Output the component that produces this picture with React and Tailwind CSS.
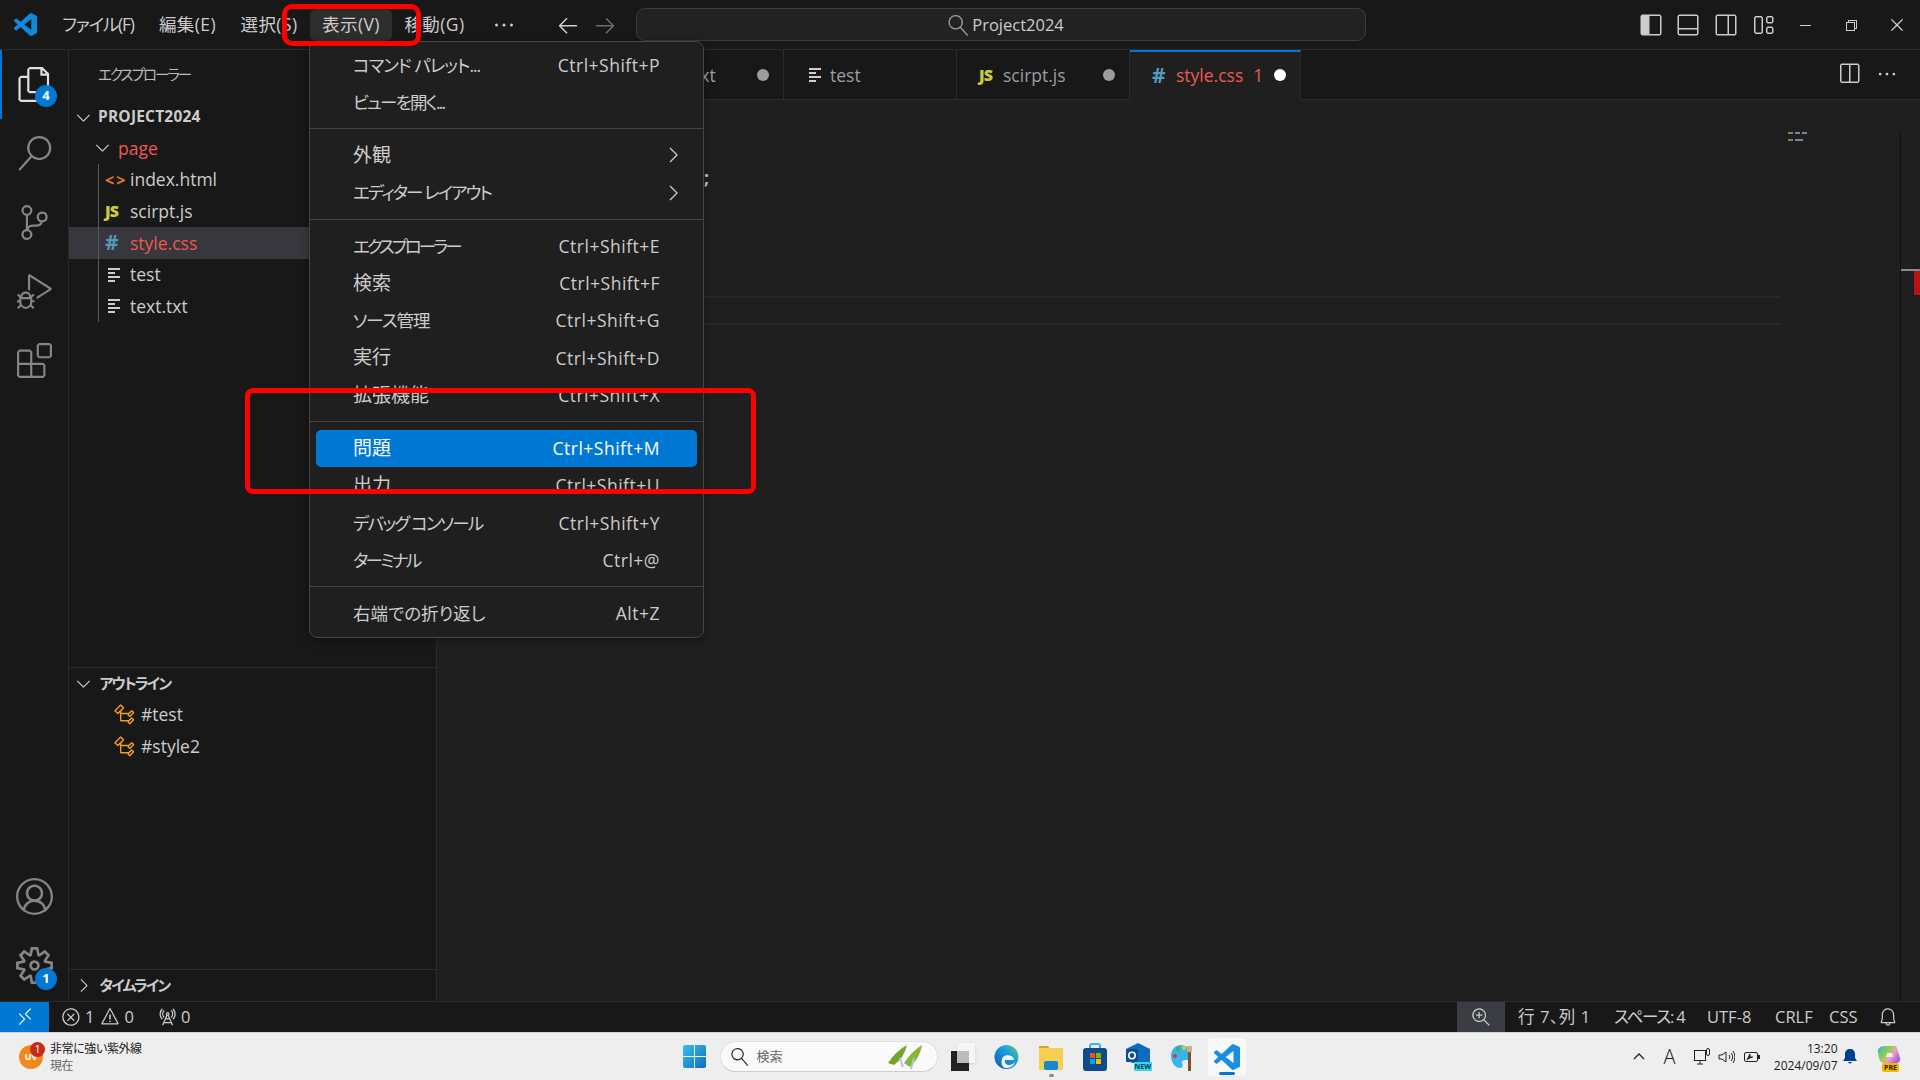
import React from "react";
import {
  VscFiles, VscSearch, VscSourceControl, VscDebugAlt, VscExtensions, VscAccount, VscSettingsGear,
  VscChevronDown, VscChevronRight, VscArrowLeft, VscArrowRight, VscEllipsis, VscLayoutSidebarLeft,
  VscLayoutPanelOff, VscLayoutSidebarRightOff, VscLayout, VscSplitHorizontal, VscChromeMinimize,
  VscChromeRestore, VscChromeClose, VscRemote, VscError, VscWarning, VscRadioTower, VscZoomIn, VscBell,
  VscSymbolClass,
} from "react-icons/vsc";

const Badge = ({ n }) => (
  <span className="absolute right-[11px] bottom-[12px] w-[22px] h-[22px] rounded-full bg-[#0078d4] text-white text-[13px] font-bold flex items-center justify-center">{n}</span>
);

const Activity = ({ icon: Icon, active, badge }) => (
  <div className={"relative h-[69px] w-full flex items-center justify-center " + (active ? "text-[#e0e0e0]" : "text-[#858585]")}>
    {active && <span className="absolute left-0 top-0 bottom-0 w-[2px] bg-[#0078d4]" />}
    <Icon size={35} />
    {badge && <Badge n={badge} />}
  </div>
);

const TextIcon = () => (
  <span className="w-[13px] ml-[3px] flex flex-col gap-[2px]">
    <span className="h-[2px] w-[12px] bg-[#cccccc]" />
    <span className="h-[2px] w-[7px] bg-[#cccccc]" />
    <span className="h-[2px] w-[12px] bg-[#cccccc]" />
    <span className="h-[2px] w-[7px] bg-[#cccccc]" />
  </span>
);
const JsIcon = () => <span className="text-[16px] font-extrabold leading-none text-[#cbcb41] tracking-[-1px]">JS</span>;
const HashIcon = () => <span className="text-[21px] font-bold leading-none text-[#519aba]">#</span>;
const HtmlIcon = () => <span className="text-[16px] font-bold leading-none text-[#e37933] tracking-[2px]">{"<>"}</span>;

const FileRow = ({ icon, name, selected }) => (
  <div className={"h-[31.7px] flex items-center pl-[36px] " + (selected ? "bg-[#37373d] text-[#f0574e]" : "text-[#cccccc]")}>
    <span className="w-[25px] flex justify-start">{icon}</span>
    <span>{name}</span>
  </div>
);

const Menu = ({ label, keys, arrow, active, tr }) => (
  <div className={"h-[37.3px] flex items-center justify-between pl-[37px] pr-[37px] mx-[6px] rounded-[5px] relative " + (active ? "bg-[#0078d4] text-white" : "text-[#cccccc]")}>
    <span className={tr || ""}>{label}</span>
    {keys && <span className="tracking-[0.5px]">{keys}</span>}
    {arrow && <VscChevronRight size={24} className="absolute right-[12px] text-[#cccccc]" />}
  </div>
);
const Sep = () => <div className="h-px my-[7.5px] bg-[#454545]" />;

const Tab = ({ w, icon, name, nameCls, extra, dot, active }) => (
  <div className={"h-full flex items-center relative border-r border-[#2b2b2b] " + w + (active ? " bg-[#1f1f1f] border-t-2 border-t-[#0078d4] pb-[1px]" : " bg-[#181818] border-b border-b-[#2b2b2b] pt-[1px]")}>
    <span className="w-[46px] pl-[22px] flex items-center">{icon}</span>
    <span className={nameCls || "text-[#9d9d9d]"}>{name}</span>
    {extra}
    {dot && <span className={"absolute right-[14px] w-[12px] h-[12px] rounded-full " + dot} />}
  </div>
);

const TitleItem = ({ w, children, cls }) => (
  <div className={"h-[32px] flex items-center justify-center rounded-[6px] tracking-[0.4px] " + w + " " + (cls || "")}>{children}</div>
);

const Status = ({ children, cls }) => <span className={"flex items-center text-[#cccccc] " + (cls || "")}>{children}</span>;

const Tray = ({ children, cls }) => (
  <div className={"relative w-[44px] h-[38px] flex items-center justify-center " + (cls || "")}>{children}</div>
);

const VsLogo = ({ size, className }) => (
  <svg viewBox="0 0 24 24" width={size} height={size} className={className} fill="currentColor">
    <path d="M23.15 2.587L18.21.21a1.494 1.494 0 0 0-1.705.29l-9.46 8.63-4.12-3.128a.999.999 0 0 0-1.276.057L.327 7.261A1 1 0 0 0 .326 8.74L3.899 12 .326 15.26a1 1 0 0 0 .001 1.479L1.65 17.94a.999.999 0 0 0 1.276.057l4.12-3.128 9.46 8.63a1.492 1.492 0 0 0 1.704.29l4.942-2.377A1.5 1.5 0 0 0 24 20.06V3.939a1.5 1.5 0 0 0-.85-1.352zm-5.146 14.861L10.826 12l7.178-5.448v10.896z" />
  </svg>
);

export default function App() {
  return (
    <div className='relative w-[1920px] h-[1080px] overflow-hidden flex flex-col bg-[#181818] text-[17.5px] [font-family:"Open_Sans","Noto_Sans_CJK_JP",sans-serif] [font-feature-settings:"palt"]'>
      {/* title bar */}
      <div className="h-[50px] shrink-0 flex items-center border-b border-[#2b2b2b] text-[#cccccc]">
        <div className="w-[49px] flex justify-center pl-[2px]"><VsLogo size={23} className="text-[#0f8ae0]" /></div>
        <TitleItem w="w-[98px]"><span className="tracking-[-1.2px]">ファイル(F)</span></TitleItem>
        <TitleItem w="w-[81px]">編集(E)</TitleItem>
        <TitleItem w="w-[82px]">選択(S)</TitleItem>
        <TitleItem w="w-[82px]" cls="bg-[#2e2e2e]">表示(V)</TitleItem>
        <TitleItem w="w-[85px]">移動(G)</TitleItem>
        <TitleItem w="w-[54px]"><VscEllipsis size={24} /></TitleItem>
        <TitleItem w="w-[37px] ml-[18px]"><VscArrowLeft size={24} /></TitleItem>
        <TitleItem w="w-[37px]"><VscArrowRight size={24} className="text-[#6e6e6e]" /></TitleItem>
        <div className="ml-[13px] w-[730px] h-[33px] pt-[1px] bg-[#222222] border border-[#3c3c3c] rounded-[9px] flex items-center justify-center gap-[3px] pl-[10px] text-[16.5px]">
          <VscSearch size={21} className="-scale-x-100 text-[#9a9a9a]" />
          <span>Project2024</span>
        </div>
        <div className="flex-1" />
        {[VscLayoutSidebarLeft, VscLayoutPanelOff, VscLayoutSidebarRightOff, VscLayout].map((I, i) => (
          <div key={i} className="w-[37.5px] flex justify-center"><I size={24} /></div>
        ))}
        <div className="w-[46px] flex justify-center"><VscChromeMinimize size={16} /></div>
        <div className="w-[46px] flex justify-center"><VscChromeRestore size={16} /></div>
        <div className="w-[46px] flex justify-center"><VscChromeClose size={18} /></div>
      </div>

      {/* main */}
      <div className="flex-1 flex min-h-0">
        {/* activity bar */}
        <div className="w-[69px] shrink-0 border-r border-[#2b2b2b] flex flex-col">
          <Activity icon={VscFiles} active badge="4" />
          <Activity icon={VscSearch} />
          <Activity icon={VscSourceControl} />
          <Activity icon={VscDebugAlt} />
          <Activity icon={VscExtensions} />
          <div className="flex-1" />
          <div className="h-[70px] flex items-center justify-center text-[#858585] pb-[1px]"><VscAccount size={37} /></div>
          <div className="relative h-[69px] flex items-center justify-center text-[#858585] pb-[3px]">
            <VscSettingsGear size={37} />
            <span className="absolute right-[11px] top-[36px] w-[22px] h-[22px] rounded-full bg-[#0078d4] text-white text-[13px] font-bold flex items-center justify-center">1</span>
          </div>
        </div>

        {/* sidebar */}
        <div className="w-[368px] shrink-0 border-r border-[#2b2b2b] flex flex-col">
          <div className="h-[50px] shrink-0 flex items-center pl-[29px] text-[14.5px] text-[#bbbbbb] tracking-[-2px]">エクスプローラー</div>
          <div className="h-[32px] shrink-0 flex items-center pl-[4px] pt-[2px] text-[15.5px] font-bold text-[#cccccc] tracking-[0.2px]">
            <VscChevronDown size={21} className="mr-[4px]" />PROJECT2024
          </div>
          <div className="h-[31.7px] shrink-0 flex items-center pl-[23px] text-[#f0574e]">
            <VscChevronDown size={21} className="mr-[5px] text-[#cccccc]" />page
          </div>
          <div className="relative shrink-0">
            <span className="absolute left-[29px] top-0 bottom-0 w-px bg-[#585858]" />
            <FileRow icon={<HtmlIcon />} name="index.html" />
            <FileRow icon={<JsIcon />} name="scirpt.js" />
            <FileRow icon={<HashIcon />} name="style.css" selected />
            <FileRow icon={<TextIcon />} name="test" />
            <FileRow icon={<TextIcon />} name="text.txt" />
          </div>
          <div className="h-[344.8px] shrink-0" />
          <div className="border-t border-[#2b2b2b] h-[31.5px] shrink-0 flex items-center pl-[4px] text-[15px] font-bold text-[#cccccc] tracking-[-1.8px]">
            <VscChevronDown size={21} className="mr-[5.5px]" />アウトライン
          </div>
          {["#test", "#style2"].map((t) => (
            <div key={t} className="h-[32px] shrink-0 flex items-center pl-[44px] text-[#cccccc]">
              <VscSymbolClass size={23} className="mr-[5px] text-[#ee9d28]" />{t}
            </div>
          ))}
          <div className="flex-1" />
          <div className="border-t border-[#2b2b2b] h-[32px] shrink-0 flex items-center pl-[4px] text-[15px] font-bold text-[#cccccc] tracking-[-1.8px]">
            <VscChevronRight size={21} className="mr-[5.5px]" />タイムライン
          </div>
        </div>

        {/* editor */}
        <div className="flex-1 min-w-0 flex flex-col bg-[#1f1f1f]">
          <div className="h-[49.5px] shrink-0 flex bg-[#181818]">
            <Tab w="w-[175px]" />
            <Tab w="w-[172px]" icon={<TextIcon />} name="text.txt" dot="bg-[#9d9d9d]" />
            <Tab w="w-[173px]" icon={<TextIcon />} name="test" />
            <Tab w="w-[173px]" icon={<JsIcon />} name="scirpt.js" dot="bg-[#9d9d9d]" />
            <Tab
              w="w-[171px]"
              active
              icon={<HashIcon />}
              name="style.css"
              nameCls="text-[#f0574e]"
              extra={<span className="ml-[10px] text-[#f0574e]">1</span>}
              dot="bg-white"
            />
            <div className="flex-1 border-b border-[#2b2b2b] flex items-center justify-end pr-[22px] gap-[15px] text-[#cccccc]">
              <VscSplitHorizontal size={24} />
              <VscEllipsis size={22} />
            </div>
          </div>
          <div className="flex-1 flex min-h-0">
            <div className="flex-1 min-w-0 flex">
              <div className="w-[1343px] shrink-0 pt-[64px] pl-[267px] flex flex-col">
                <div className="h-[28px] flex items-center text-[#cccccc] font-bold">;</div>
                <div className="mt-[104px] ml-[-267px] h-[29px] border-y-2 border-[#282828]" />
              </div>
              <div className="pl-[8px] pt-[32px] flex flex-col gap-[5px]">
                <div className="flex gap-[2px]"><span className="w-[5px] h-[2px] bg-[#8a7a5a]" /><span className="w-[5px] h-[2px] bg-[#6a8aa0]" /><span className="w-[5px] h-[2px] bg-[#6a8aa0]" /></div>
                <div className="flex gap-[2px]"><span className="w-[5px] h-[2px] bg-[#8a7a5a]" /><span className="w-[8px] h-[2px] bg-[#6a8aa0]" /></div>
              </div>
            </div>
            <div className="w-[20px] shrink-0 mt-[33px] border-l border-[#111111] flex flex-col">
              <div className="mt-[136px] h-[2px] bg-[#8a8a8a]" />
              <div className="ml-[13px] w-[6px] h-[24px] bg-[#b81212]" />
            </div>
          </div>
        </div>
      </div>

      {/* status bar */}
      <div className="h-[31px] shrink-0 border-t border-[#2b2b2b] flex items-center text-[16.5px]">
        <div className="w-[49px] h-full bg-[#0078d4] text-white flex items-center justify-center"><VscRemote size={20} /></div>
        <Status cls="ml-[12px]"><VscError size={20} className="mr-[4px]" />1</Status>
        <Status cls="ml-[6px]"><VscWarning size={20} className="mr-[4px]" />0</Status>
        <Status cls="ml-[23px]"><VscRadioTower size={20} className="mr-[4px]" />0</Status>
        <div className="flex-1" />
        <div className="w-[48px] h-full bg-[#3a3d41] flex items-center justify-center text-[#cccccc]"><VscZoomIn size={20} /></div>
        <Status cls="ml-[13px] w-[96px] tracking-[0.6px]">行 7、列 1</Status>
        <Status cls="w-[93px] tracking-[-1.2px]">スペース: 4</Status>
        <Status cls="w-[68px]">UTF-8</Status>
        <Status cls="w-[54px]">CRLF</Status>
        <Status cls="w-[43px]">CSS</Status>
        <div className="w-[32px] mr-[16px] flex justify-center text-[#cccccc]"><VscBell size={20} /></div>
      </div>

      {/* taskbar */}
      <div className="h-[48px] shrink-0 bg-[#eeeeee] border-t border-[#d4d4d4] flex items-center text-[#1a1a1a]">
        <div className="w-[677px] shrink-0 flex items-center pl-[19px]">
          <div className="relative w-[24px] h-[24px] rounded-full bg-[#f08a1e] text-white text-[9px] font-bold flex items-center justify-center">
            UV
            <span className="absolute -top-[3px] left-[11px] w-[15px] h-[15px] rounded-full bg-[#c42b1c] text-[10px] font-normal flex items-center justify-center">1</span>
          </div>
          <div className="ml-[7px] flex flex-col leading-[17px] text-[12px] tracking-[-0.4px]">
            <span>非常に強い紫外線</span>
            <span className="text-[#666666]">現在</span>
          </div>
        </div>
        <div className="w-[34px] flex justify-center">
          <svg width="23" height="23" viewBox="0 0 23 23">
            <defs><linearGradient id="win" x1="0" y1="0" x2="1" y2="1"><stop offset="0" stopColor="#35c1f1" /><stop offset="1" stopColor="#0f6cbd" /></linearGradient></defs>
            <path fill="url(#win)" d="M0 2a2 2 0 0 1 2-2h9v11H0zM12 0h9a2 2 0 0 1 2 2v9H12zM0 12h11v11H2a2 2 0 0 1-2-2zM12 12h11v9a2 2 0 0 1-2 2h-9z" />
          </svg>
        </div>
        <div className="w-[218px] ml-[8.5px] h-[31px] bg-[#fafafa] border border-[#e0e0e0] border-b-[#cfcfcf] rounded-full flex items-center pl-[10px] text-[13px] text-[#666666]">
          <VscSearch size={18} className="-scale-x-100 text-[#222222]" />
          <span className="ml-[8px]">検索</span>
          <svg className="ml-[102px]" width="40" height="30" viewBox="0 0 38 30">
            <path d="M2 21 Q10 9 21 3 Q18 16 8 23Z" fill="#74a52a" />
            <path d="M18 21 Q26 9 36 3 Q34 16 24 25Z" fill="#86b53a" />
            <path d="M14 16l3 9M28 16l-3 11" stroke="#a8c7d8" strokeWidth="2" />
          </svg>
        </div>
        <Tray cls="ml-[3px]">
          <span className="relative w-[24px] h-[28px]">
            <span className="absolute left-0 bottom-0 w-[18px] h-[20px] bg-[#222222]" />
            <span className="absolute right-0 top-0 w-[18px] h-[20px] bg-[#f5f5f5] shadow-sm" />
            <span className="absolute left-[6px] top-[8px] w-[12px] h-[12px] bg-[#bbbbbb]" />
          </span>
        </Tray>
        <Tray>
          <svg width="25" height="28" viewBox="0 0 25 28">
            <defs><linearGradient id="edge" x1="0" y1="1" x2="1" y2="0"><stop offset="0" stopColor="#0c59a4" /><stop offset=".6" stopColor="#1b9de2" /><stop offset="1" stopColor="#5ed36a" /></linearGradient></defs>
            <circle cx="12.5" cy="14" r="12" fill="url(#edge)" />
            <path d="M24 17H11c-1 3 2 5 4 5 2 0 5-1 6-3-1 4-5 6-9 6-4 0-6-6-3-11 2-2 6-2 8-1 2 1 3 2 3 4z" fill="#fff" opacity=".95" />
          </svg>
        </Tray>
        <Tray>
          <svg width="24" height="26" viewBox="0 0 24 26">
            <path d="M0 2h9l2 3h-11z" fill="#d9a520" />
            <rect y="4" width="24" height="22" rx="1" fill="#f7cf52" />
            <rect x="5" y="17" width="14" height="9" rx="2" fill="#1a86d0" />
          </svg>
          <span className="absolute bottom-[-1px] left-[20px] w-[5px] h-[3px] rounded-full bg-[#8a8a8a]" />
        </Tray>
        <Tray>
          <svg width="24" height="28" viewBox="0 0 24 28">
            <path d="M7 6V3a2 2 0 0 1 2-2h6a2 2 0 0 1 2 2v3" fill="none" stroke="#35b8e8" strokeWidth="2" />
            <rect y="5" width="24" height="23" rx="3" fill="#0f4a8a" />
            <rect x="7" y="10" width="5" height="5" fill="#f25022" /><rect x="13" y="10" width="5" height="5" fill="#7fba00" />
            <rect x="7" y="16" width="5" height="5" fill="#00a4ef" /><rect x="13" y="16" width="5" height="5" fill="#ffb900" />
          </svg>
        </Tray>
        <Tray>
          <div className="relative w-[25px] h-[28px]">
            <svg width="24" height="27" viewBox="0 0 24 27" className="block">
              <path d="M12 0l12 6v14H6L0 15V6z" fill="#0f6cbd" />
              <rect x="0" y="6" width="12" height="13" rx="1" fill="#0a4e96" />
              <circle cx="6" cy="12.5" r="3.2" fill="none" stroke="#fff" strokeWidth="1.6" />
            </svg>
            <span className="absolute right-[-1px] bottom-0 h-[9px] px-[1px] bg-[#3ed6e6] text-[#10365a] text-[7px] font-bold leading-[9px]">NEW</span>
          </div>
        </Tray>
        <Tray>
          <svg width="24" height="28" viewBox="0 0 24 28">
            <path d="M10 2C3 2 0 8 0 13c0 6 4 12 9 12 3 0 3-3 2-5-1-3 3-3 5-3 2 0 4-1 4-5 0-6-5-10-10-10z" fill="#35b5ee" />
            <circle cx="4" cy="13" r="2" fill="#d83b2b" /><circle cx="7" cy="6" r="2" fill="#4caf2f" /><circle cx="13" cy="5" r="2" fill="#f6c026" />
            <rect x="17" y="7" width="3" height="21" fill="#7a5230" /><rect x="16" y="3" width="5" height="6" rx="1" fill="#c9b08a" />
          </svg>
        </Tray>
        <div className="relative w-[38px] h-[38px] ml-[3px] rounded-[4px] bg-[#f8f8f8] flex items-center justify-center">
          <VsLogo size={26} className="text-[#1a8fe0]" />
          <span className="absolute bottom-[1px] left-[11px] w-[16px] h-[3px] rounded-full bg-[#0078d4]" />
        </div>
        <div className="flex-1" />
        <svg width="12" height="7" viewBox="0 0 12 7" className="mr-[19px]"><path d="M1 6l5-5 5 5" fill="none" stroke="#222" strokeWidth="1.3" /></svg>
        <span className="w-[30px] text-[20px] font-light leading-none">A</span>
        <svg width="16" height="17" viewBox="0 0 16 17" fill="none" stroke="#222" strokeWidth="1" className="mr-[8.5px]"><rect x=".5" y="2.5" width="11" height="10" /><path d="M6 13v3M3 16h6" /><rect x="12.5" y=".5" width="3" height="7" rx="1.5" fill="#eee" /></svg>
        <svg width="17" height="14" viewBox="0 0 17 14" fill="none" stroke="#222" strokeWidth="1" className="mr-[8.5px]"><path d="M1 5h3l4-3v10l-4-3H1zM11 5q2 2 0 4M13 3q3.500 4 0 8M15 1q4 6 0 12" /></svg>
        <svg width="17" height="13" viewBox="0 0 17 13" fill="none" stroke="#222" strokeWidth="1" className="mr-[11px]"><rect x=".5" y="2.500" width="13" height="9" rx="1.500" /><path d="M15 5v4" strokeWidth="2" /><path d="M3 10l3-6v3h3" fill="#222" /></svg>
        <div className="w-[66px] flex flex-col items-end text-[12px] leading-[17px]">
          <span>13:20</span>
          <span>2024/09/07</span>
        </div>
        <svg width="14" height="15" viewBox="0 0 14 15" className="ml-[5.500px]"><path d="M7 0c3 0 5 2 5 5v4l2 3H0l2-3V5c0-3 2-5 5-5zM5 13h4q-2 3-4 0z" fill="#003e92" /></svg>
        <div className="relative ml-[20px] mr-[19px] w-[24px] h-[24px]">
          <svg width="24" height="20" viewBox="0 0 24 20">
            <defs><linearGradient id="cop" x1="0" y1="0" x2="1" y2="0.6"><stop offset="0" stopColor="#2fb5e8" /><stop offset=".45" stopColor="#8fd048" /><stop offset=".7" stopColor="#f0a0c0" /><stop offset="1" stopColor="#b060e0" /></linearGradient></defs>
            <path d="M8 1h9c3 0 3 2 4 5l2 7c1 3-1 5-4 5H7c-3 0-4-2-5-5L1 7c-1-3 2-6 7-6z" fill="url(#cop)" />
            <path d="M10 8h5l1 4H9z" fill="#ffffff" opacity=".8" />
          </svg>
          <span className="absolute left-[5px] bottom-[-3px] h-[9px] px-[2px] rounded-[2px] bg-[#f5b800] text-[#222] text-[7px] font-bold leading-[9px]">PRE</span>
        </div>
      </div>

      {/* view menu */}
      <div className="absolute left-[309px] top-[41px] w-[395px] h-[597px] pt-[4px] bg-[#1f1f1f] border border-[#454545] rounded-[8px] rounded-tl-none shadow-[0_2px_8px_rgba(0,0,0,0.36)]">
        <Menu label="コマンド パレット..." keys="Ctrl+Shift+P" tr="tracking-[-1px]" />
        <Menu label="ビューを開く..." tr="tracking-[-1.8px]" />
        <Sep />
        <Menu label="外観" arrow tr="text-[19px]" />
        <Menu label="エディター レイアウト" arrow tr="tracking-[-1.9px]" />
        <Sep />
        <Menu label="エクスプローラー" keys="Ctrl+Shift+E" tr="tracking-[-3px]" />
        <Menu label="検索" keys="Ctrl+Shift+F" tr="text-[19px]" />
        <Menu label="ソース管理" keys="Ctrl+Shift+G" tr="tracking-[-1px]" />
        <Menu label="実行" keys="Ctrl+Shift+D" tr="text-[19px]" />
        <Menu label="拡張機能" keys="Ctrl+Shift+X" tr="text-[19px]" />
        <Sep />
        <Menu label="問題" keys="Ctrl+Shift+M" active tr="text-[19px]" />
        <Menu label="出力" keys="Ctrl+Shift+U" tr="text-[19px]" />
        <Menu label="デバッグ コンソール" keys="Ctrl+Shift+Y" tr="tracking-[-1.8px]" />
        <Menu label="ターミナル" keys="Ctrl+@" tr="tracking-[-2.7px]" />
        <Sep />
        <Menu label="右端での折り返し" keys="Alt+Z" />
      </div>

      {/* red annotations */}
      <div className="absolute left-[282px] top-[4px] w-[139px] h-[42px] border-[5px] border-[#ff0000] rounded-[10px]" />
      <div className="absolute left-[245px] top-[388px] w-[511px] h-[106px] border-[5px] border-[#ff0000] rounded-[8px]" />
    </div>
  );
}
